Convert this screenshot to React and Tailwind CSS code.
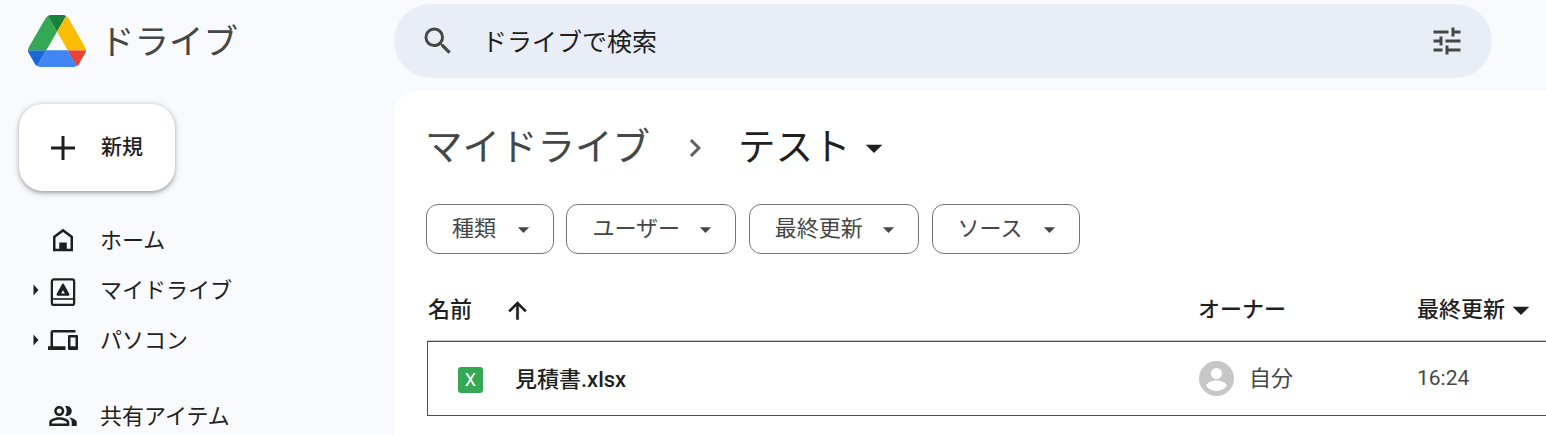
import React from 'react';

const fontStack = "font-['Roboto','Noto_Sans_CJK_JP',sans-serif]";

const Icon = ({ d, size = 36, className = '' }) => (
    <svg viewBox="0 0 24 24" width={size} height={size} fill="currentColor" className={`shrink-0 ${className}`}>
        <path d={d} />
    </svg>
);

const paths = {
    search: 'M15.5 14h-.79l-.28-.27A6.471 6.471 0 0 0 16 9.5 6.5 6.5 0 1 0 9.5 16c1.61 0 3.09-.59 4.23-1.57l.27.28v.79l5 4.99L20.49 19l-4.99-5zm-6 0C7.01 14 5 11.99 5 9.5S7.01 5 9.5 5 14 7.01 14 9.5 11.99 14 9.5 14z',
    tune: 'M3 17v2h6v-2H3zM3 5v2h10V5H3zm10 16v-2h8v-2h-8v-2h-2v6h2zM7 9v2H3v2h4v2h2V9H7zm14 4v-2H11v2h10zm-6-4h2V7h4V5h-4V3h-2v6z',
    plus: 'M20 13h-7v7h-2v-7H4v-2h7V4h2v7h7z',
    up: 'M4 12l1.41 1.41L11 7.83V20h2V7.83l5.58 5.59L20 12l-8-8-8 8z',
    drop: 'M7 10l5 5 5-5z',
    chevron: 'M10 6L8.59 7.41 13.17 12l-4.58 4.59L10 18l6-6z',
    home: 'M12 3 4 9v12h16V9l-8-6zm6 16h-3v-5H9v5H6v-9l6-4.5 6 4.5v9z',
    devices: 'M4 6h18V4H4c-1.1 0-2 .9-2 2v11H0v3h14v-3H4V6zm19 2h-6c-.55 0-1 .45-1 1v10c0 .55.45 1 1 1h6c.55 0 1-.45 1-1V9c0-.55-.45-1-1-1zm-1 9h-4v-7h4v7z',
    people: 'M16.67 13.13C18.04 14.06 19 15.32 19 17v3h4v-3c0-2.18-3.57-3.47-6.33-3.87zM15 12c2.21 0 4-1.79 4-4s-1.79-4-4-4c-.47 0-.91.1-1.33.24C14.5 5.27 15 6.58 15 8s-.5 2.73-1.33 3.76c.42.14.86.24 1.33.24zM9 12c2.21 0 4-1.79 4-4s-1.79-4-4-4-4 1.79-4 4 1.79 4 4 4zm0-6c1.1 0 2 .9 2 2s-.9 2-2 2-2-.9-2-2 .9-2 2-2zM9 13c-2.67 0-8 1.34-8 4v3h16v-3c0-2.66-5.33-4-8-4zm6 5H3v-.99C3.2 16.29 6.3 15 9 15s5.8 1.29 6 2v1z',
};

const DriveLogo = () => (
    <svg viewBox="0 0 87.3 78" width="58" height="52" className="shrink-0">
        <path d="m6.6 66.85 3.85 6.65c.8 1.4 1.95 2.5 3.3 3.3l13.75-23.8h-27.5c0 1.55.4 3.1 1.2 4.5z" fill="#1967d2" />
        <path d="m43.65 25-13.75-23.8c-1.35.8-2.5 1.9-3.3 3.3l-25.4 44a9.06 9.06 0 0 0 -1.2 4.5h27.5z" fill="#34a853" />
        <path d="m73.55 76.8c1.35-.8 2.5-1.9 3.3-3.3l1.6-2.75 7.65-13.25c.8-1.4 1.2-2.95 1.2-4.5h-27.502l5.852 11.5z" fill="#ea4335" />
        <path d="m43.65 25 13.75-23.8c-1.35-.8-2.9-1.2-4.5-1.2h-18.5c-1.6 0-3.15.45-4.5 1.2z" fill="#188038" />
        <path d="m59.8 53h-32.3l-13.75 23.8c1.35.8 2.9 1.2 4.5 1.2h50.8c1.6 0 3.15-.45 4.5-1.2z" fill="#4285f4" />
        <path d="m73.4 26.5-12.7-22c-.8-1.4-1.95-2.5-3.3-3.3l-13.75 23.8 16.15 28h27.45c0-1.55-.4-3.1-1.2-4.5z" fill="#fbbc04" />
    </svg>
);

const MyDriveIcon = () => (
    <svg viewBox="0 0 24 24" width="30" height="30" fill="none" className="mt-[3px] shrink-0">
        <rect x="3.1" y="1.9" width="17.8" height="20.4" rx="1.6" stroke="currentColor" strokeWidth="1.8" />
        <path d="M3.1 17.600h17.800" stroke="currentColor" strokeWidth="1.3" />
        <path d="M12 6.200 16.300 14H7.700z" fill="currentColor" stroke="currentColor" strokeWidth="1.800" strokeLinejoin="round" />
        <path d="M12 10.600 13.500 13.200h-3z" fill="#f8fafd" />
    </svg>
);

const NavItem = ({ icon, label, caret }) => (
    <div className="flex h-[50px] items-center pl-[33px] text-[22px] text-[#1f1f1f]">
        <span className="flex w-[15px] shrink-0">
            {caret && (
                <svg viewBox="0 0 6 12" width="6" height="12">
                    <path d="M0.5 0.5 5.5 6 0.5 11.5z" fill="#1f1f1f" />
                </svg>
            )}
        </span>
        {icon}
        <span className="ml-[22px] pt-[1px]">{label}</span>
    </div>
);

const FilterChip = ({ label, width }) => (
    <button className={`flex h-[50px] items-center justify-between rounded-[12px] border border-[#747775] bg-white pl-[25px] pr-[16px] text-[22px] text-[#444746] ${width}`}>
        <span>{label}</span>
        <Icon d={paths.drop} size={27} />
    </button>
);

const App = () => {
    return (
        <div className={`flex h-[435px] w-[1546px] overflow-hidden bg-[#f8fafd] leading-none ${fontStack}`}>
            <aside className="w-[394px] shrink-0">
                <div className="flex items-center pl-[28px] pt-[15px]">
                    <DriveLogo />
                    <span className="ml-[14px] pt-[2px] text-[34.5px] text-[#444746]">ドライブ</span>
                </div>
                <button className="ml-[19px] mt-[37px] flex h-[87px] w-[156px] items-center rounded-[24px] bg-white pl-[26px] text-[21px] font-medium text-[#1f1f1f] shadow-[0_1.5px_3px_rgba(60,64,67,0.3),0_1.5px_5px_2px_rgba(60,64,67,0.15)]">
                    <Icon d={paths.plus} size={36} />
                    <span className="ml-[20px]">新規</span>
                </button>
                <nav className="mt-[24px]">
                    <NavItem label="ホーム" icon={<Icon d={paths.home} size={30} />} />
                    <NavItem label="マイドライブ" caret icon={<MyDriveIcon />} />
                    <NavItem label="パソコン" caret icon={<Icon d={paths.devices} size={30} />} />
                    <div className="mt-[26px]">
                        <NavItem label="共有アイテム" icon={<Icon d={paths.people} size={30} />} />
                    </div>
                </nav>
            </aside>

            <main className="flex min-w-0 flex-1 flex-col">
                <div className="flex h-[91px] shrink-0 items-start pt-[4px]">
                    <div className="flex h-[74px] w-[1098px] items-center rounded-full bg-[#e9eef6] pl-[26px] pr-[27px] text-[#444746]">
                        <Icon d={paths.search} size={36} />
                        <span className="ml-[26px] flex-1 pt-[2px] text-[25px] text-[#1f1f1f]">ドライブで検索</span>
                        <Icon d={paths.tune} size={36} />
                    </div>
                </div>

                <section className="flex-1 rounded-tl-[24px] bg-white pl-[33px]">
                    <div className="mt-[21px] flex h-[72px] items-center text-[37.5px]">
                        <span className="-ml-[2px] text-[#444746]">マイドライブ</span>
                        <Icon d={paths.chevron} size={36} className="ml-[27px] text-[#5f6368]" />
                        <span className="ml-[25px] text-[#1f1f1f]">テスト</span>
                        <Icon d={paths.drop} size={40} className="ml-[3px] text-[#1f1f1f]" />
                    </div>

                    <div className="-ml-[1px] mt-[20px] flex gap-[12.4px]">
                        <FilterChip label="種類" width="w-[128px]" />
                        <FilterChip label="ユーザー" width="w-[170px]" />
                        <FilterChip label="最終更新" width="w-[170.4px]" />
                        <FilterChip label="ソース" width="w-[148px]" />
                    </div>

                    <div className="mt-[38px] grid h-[49px] w-[1200px] grid-cols-[771px_219px_1fr] items-start border-b border-[#c7c7c7] text-[22px] font-medium text-[#1f1f1f]">
                        <div className="flex h-[36px] items-center pl-[1px]">
                            <span>名前</span>
                            <Icon d={paths.up} size={27} className="ml-[32px] stroke-current stroke-[0.5]" />
                        </div>
                        <div className="flex h-[36px] items-center">オーナー</div>
                        <div className="flex h-[36px] items-center">
                            最終更新
                            <Icon d={paths.drop} size={40} className="-ml-[4px]" />
                        </div>
                    </div>

                    <div className="grid h-[75px] w-[1200px] grid-cols-[771px_218px_1fr] items-center border border-r-0 border-[#0b57d0] text-[22px]">
                        <div className="flex items-center pl-[30px] pt-[2px]">
                            <span className="flex h-[26px] w-[25px] items-center justify-center rounded-[3px] bg-[#34a853] text-[18px] text-white">X</span>
                            <span className="ml-[32px] pt-[1px] font-medium text-[#1f1f1f]">見積書.xlsx</span>
                        </div>
                        <div className="flex items-center text-[#444746]">
                            <svg viewBox="0 0 35 35" width="35" height="35" className="shrink-0">
                                <circle cx="17.5" cy="17.5" r="17.5" fill="#c7c7c7" />
                                <circle cx="17.5" cy="12.5" r="5.6" fill="#fff" />
                                <path d="M7 24.5c2-3.6 6-5 10.5-5s8.5 1.4 10.5 5c-2.3 3.2-6.1 5.500-10.500 5.500S9.300 27.700 7 24.500z" fill="#fff" />
                            </svg>
                            <span className="ml-[15px]">自分</span>
                        </div>
                        <div className="text-[21px] text-[#444746]">16:24</div>
                    </div>
                </section>
            </main>
        </div>
    );
};

export default App;
